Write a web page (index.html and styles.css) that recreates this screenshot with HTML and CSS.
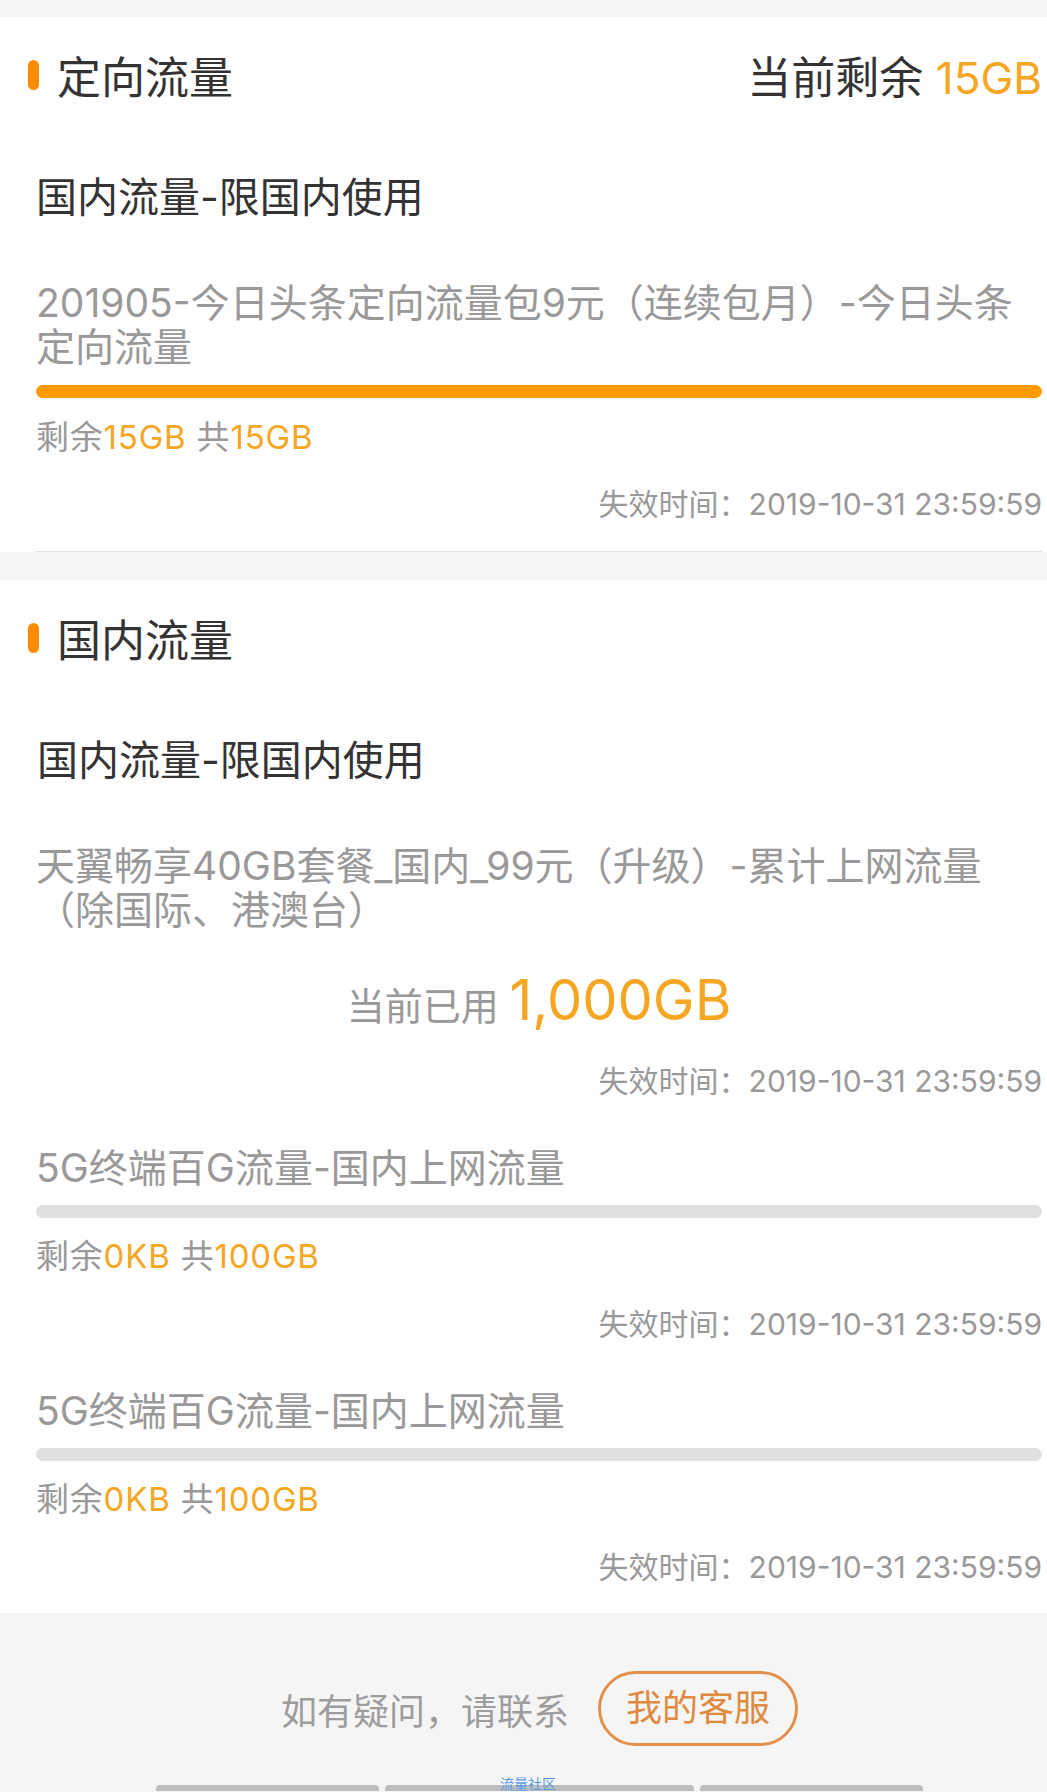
FILE: index.html
```html
<!DOCTYPE html>
<html lang="zh-CN">
<head>
<meta charset="utf-8">
<title>流量详情</title>
<link rel="stylesheet" href="styles.css">
</head>
<body>
<div class="page">
  <section class="card card-first">
    <div class="card-head">
      <span class="mark"></span>
      <span class="card-title">定向流量</span>
      <span class="card-extra">当前剩余 <em class="hl">15GB</em></span>
    </div>
    <div class="card-body">
      <div class="group-title">国内流量-限国内使用</div>
      <div class="pkg pkg-bordered">
        <div class="desc">201905-今日头条定向流量包9元（连续包月）-今日头条定向流量</div>
        <div class="bar bar-orange"></div>
        <div class="remain">剩余<em class="hl">15GB</em> 共<em class="hl">15GB</em></div>
        <div class="expire">失效时间：2019-10-31 23:59:59</div>
      </div>
    </div>
  </section>

  <section class="card card-second">
    <div class="card-head">
      <span class="mark"></span>
      <span class="card-title">国内流量</span>
    </div>
    <div class="card-body">
      <div class="group-title">国内流量-限国内使用</div>
      <div class="pkg">
        <div class="desc">天翼畅享40GB套餐_国内_99元（升级）-累计上网流量（除国际、港澳台）</div>
        <div class="used">当前已用 <em class="hl big">1,000GB</em></div>
        <div class="expire expire-used">失效时间：2019-10-31 23:59:59</div>
      </div>
      <div class="pkg pkg-item">
        <div class="desc item-title">5G终端百G流量-国内上网流量</div>
        <div class="bar bar-gray"></div>
        <div class="remain">剩余<em class="hl">0KB</em> 共<em class="hl">100GB</em></div>
        <div class="expire">失效时间：2019-10-31 23:59:59</div>
      </div>
      <div class="pkg pkg-item">
        <div class="desc item-title">5G终端百G流量-国内上网流量</div>
        <div class="bar bar-gray"></div>
        <div class="remain">剩余<em class="hl">0KB</em> 共<em class="hl">100GB</em></div>
        <div class="expire">失效时间：2019-10-31 23:59:59</div>
      </div>
    </div>
  </section>

  <footer class="footer">
    <div class="contact">
      <span class="contact-text">如有疑问，请联系</span>
      <a class="contact-btn">我的客服</a>
    </div>
    <nav class="tabbar">
      <span class="tab tab-a"></span>
      <span class="tab tab-b"></span>
      <span class="tab tab-c"></span>
      <span class="tab-label">流量社区</span>
    </nav>
  </footer>
</div>
</body>
</html>
```

FILE: styles.css
```css
html, body {
  margin: 0;
  padding: 0;
  background: #f5f5f5;
}
body {
  width: 1047px;
  height: 1792px;
  overflow: hidden;
  font-family: Inter, "Noto Sans CJK SC", sans-serif;
  color: #333;
}
em {
  font-style: normal;
}
.page {
  padding-top: 17px;
}
.card {
  background: #fff;
}
.card-second {
  margin-top: 28px;
}
.card-head {
  height: 116px;
  padding: 0 5px 4px 28px;
  display: flex;
  align-items: center;
}
.mark {
  width: 11px;
  height: 30px;
  border-radius: 6px;
  background: #ff8c00;
  margin-right: 18px;
}
.card-title {
  flex: 1;
  font-size: 44px;
  color: #333;
}
.card-extra {
  font-size: 44px;
  color: #333;
}
.hl {
  color: #f5a623;
}
.card-body {
  padding: 0 5px 0 36px;
}
.card-first .card-body {
  padding-left: 35px;
}
.card-second .card-body {
  padding-bottom: 26px;
}
.group-title {
  height: 120px;
  line-height: 120px;
  font-size: 41px;
  color: #333;
  padding-left: 1px;
}
.pkg-bordered {
  padding-bottom: 27px;
  border-bottom: 1px solid #e3e3e3;
}
.pkg-bordered > div {
  margin-left: 1px;
}
.desc {
  margin-top: 24px;
  font-size: 39px;
  line-height: 44px;
  color: #999;
}
.item-title {
  margin-top: 45px;
}
.bar {
  height: 13px;
  border-radius: 7px;
  margin-top: 16px;
}
.bar-orange {
  background: #ff9a00;
}
.bar-gray {
  background: #e0e0e0;
  margin-top: 15px;
}
.remain {
  margin-top: 19px;
  font-size: 33px;
  letter-spacing: 0.8px;
  line-height: 40px;
  color: #999;
}
.pkg-item .remain {
  margin-top: 18px;
}
.expire {
  margin-top: 27px;
  font-size: 30px;
  line-height: 40px;
  color: #999;
  text-align: right;
}
.pkg-item .expire {
  margin-top: 28px;
}
.used {
  margin-top: 33px;
  line-height: 70px;
  text-align: center;
  font-size: 38px;
  color: #999;
}
.big {
  font-size: 56px;
}
.expire-used {
  margin-top: 20px;
}
.footer {
  padding: 58px 0 0 32px;
}
.contact {
  display: flex;
  justify-content: center;
  align-items: center;
  gap: 29px;
}
.contact-text {
  font-size: 36px;
  color: #9d9d9d;
}
.contact-btn {
  display: block;
  height: 69px;
  line-height: 69px;
  padding: 0 25px;
  border: 3px solid #e2904c;
  border-radius: 40px;
  font-size: 36px;
  color: #e08a3f;
}
.tabbar {
  position: relative;
  margin-top: 39px;
  display: flex;
  justify-content: center;
  gap: 6px;
}
.tab {
  height: 6px;
  background: #bdbdbd;
  border-radius: 4px 4px 0 0;
}
.tab-a { width: 223px; }
.tab-b { width: 309px; }
.tab-c { width: 223px; }
.tab-label {
  position: absolute;
  left: 468px;
  top: -9px;
  font-size: 14px;
  line-height: 16px;
  color: #5a9ae6;
}
```
